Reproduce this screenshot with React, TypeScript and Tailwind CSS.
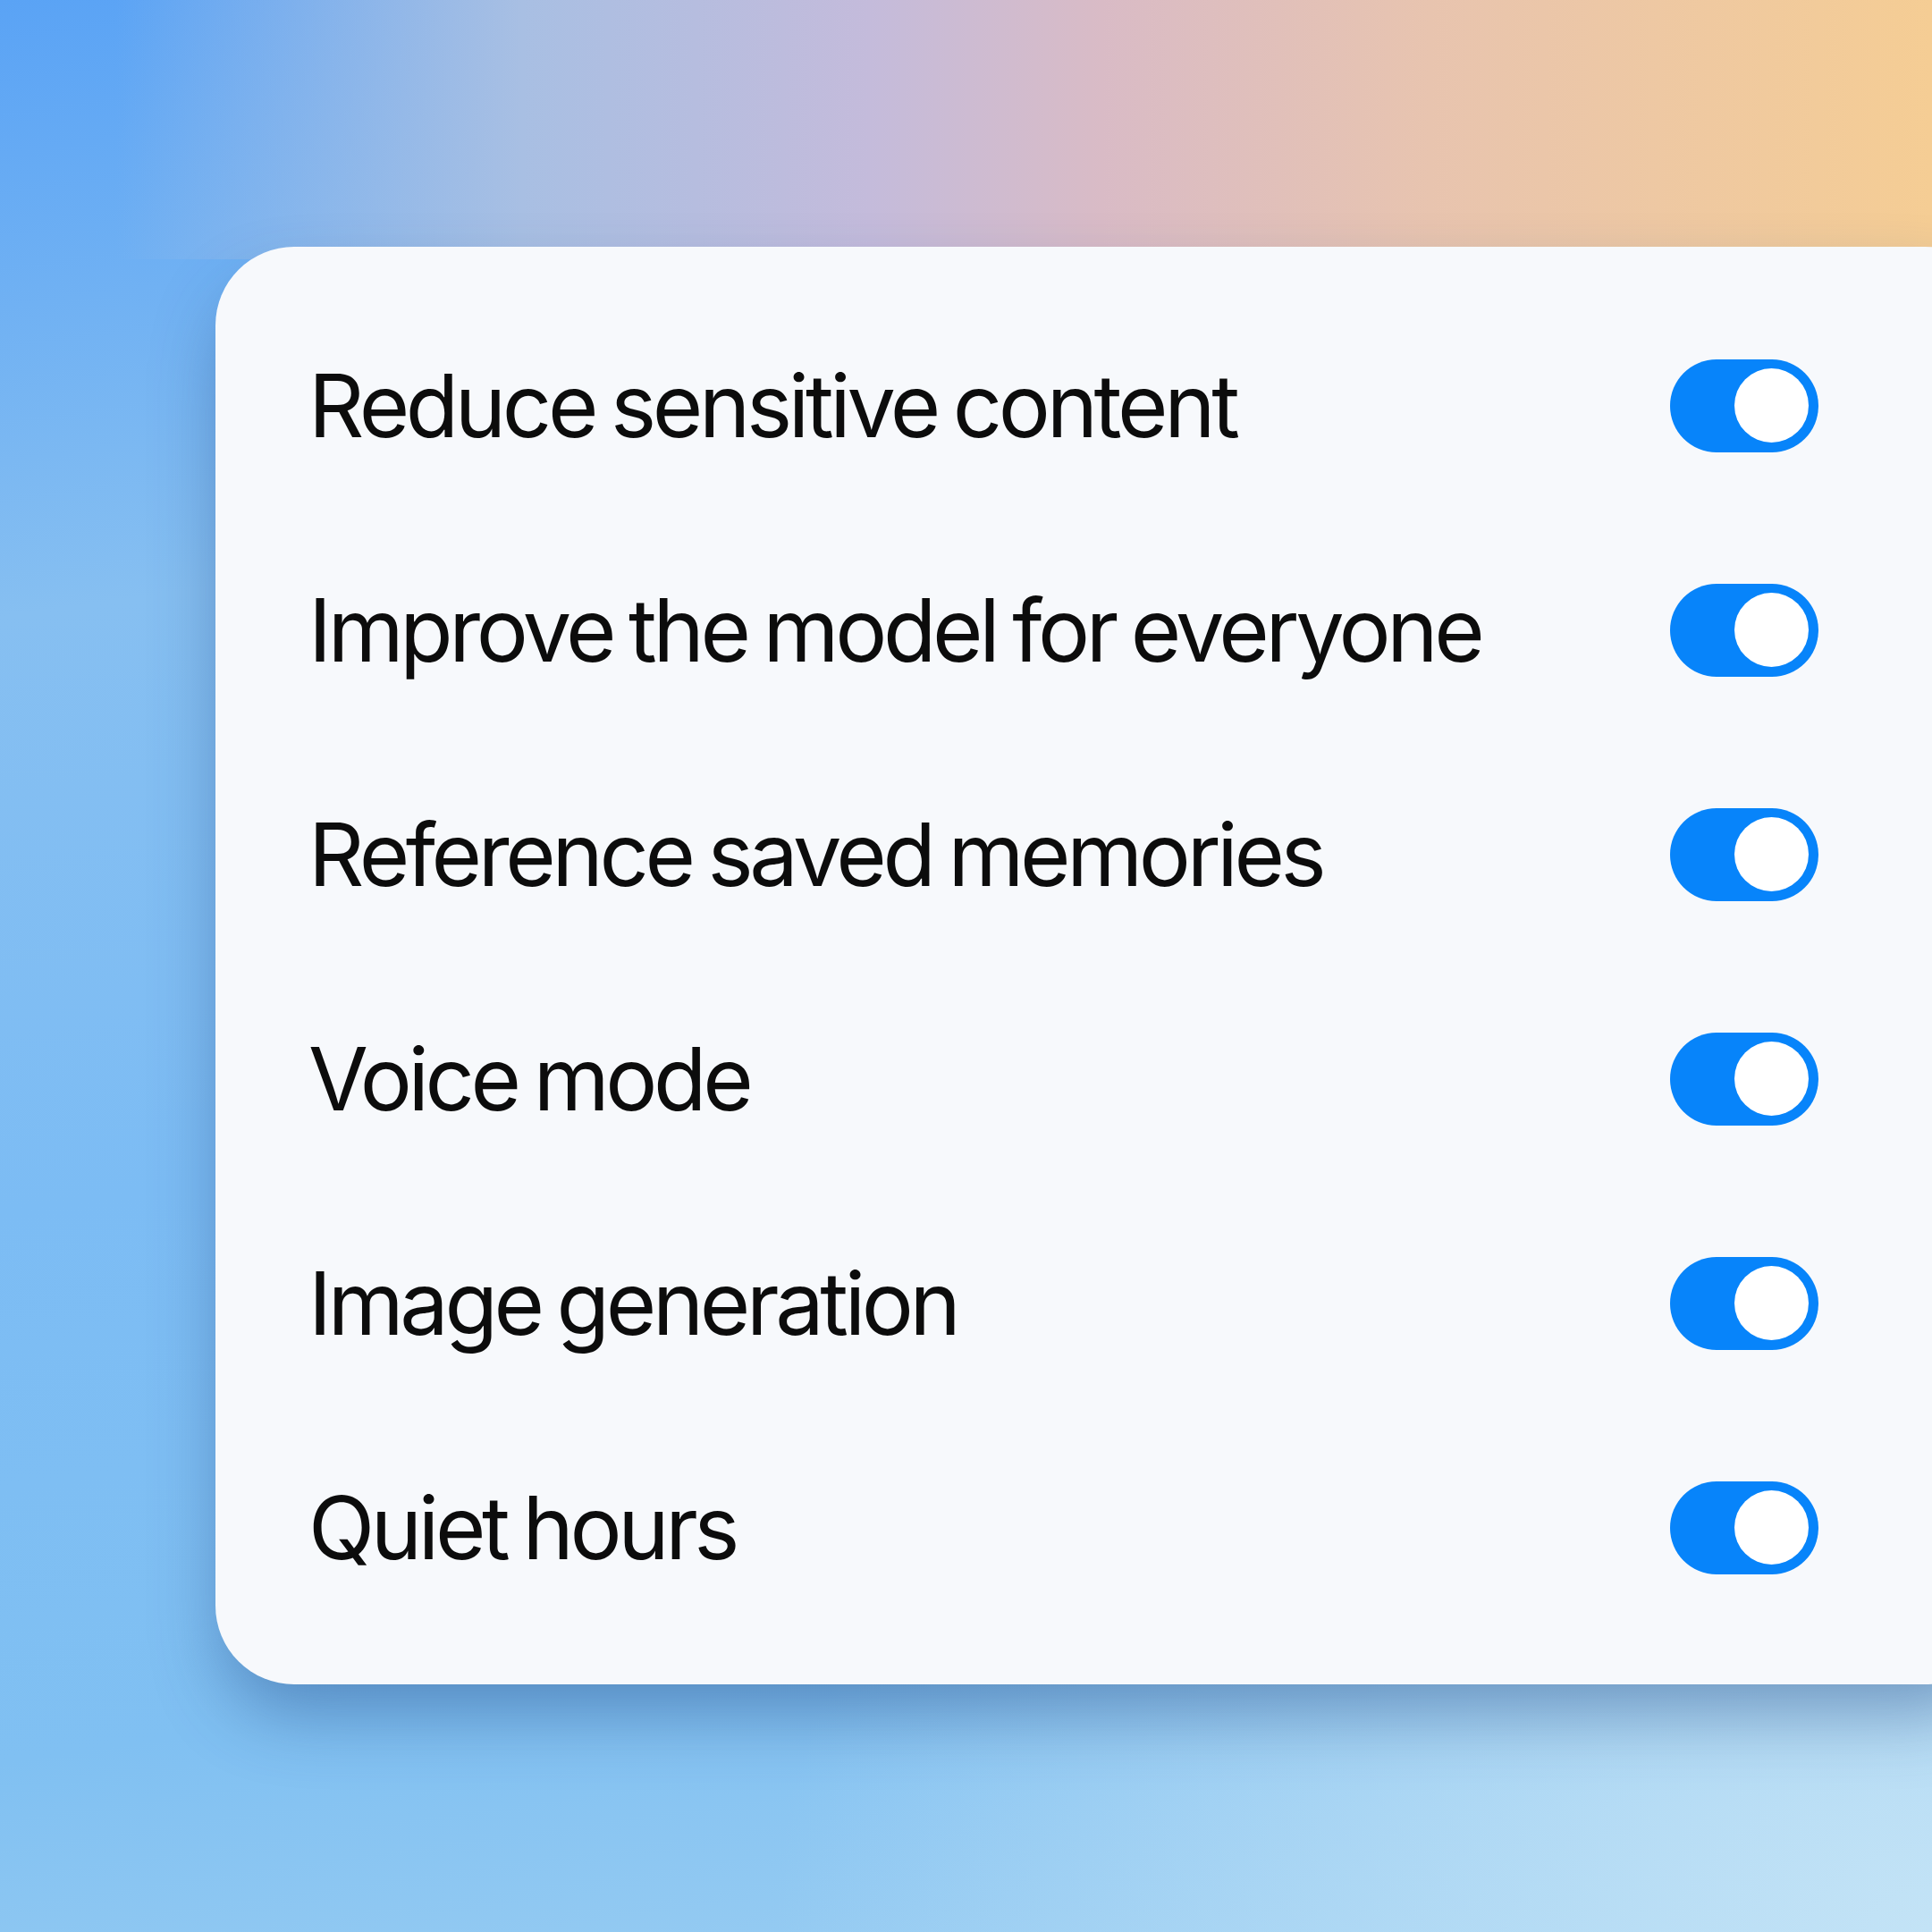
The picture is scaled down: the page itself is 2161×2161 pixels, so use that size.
const SETTINGS = [
  "Reduce sensitive content",
  "Improve the model for everyone",
  "Reference saved memories",
  "Voice mode",
  "Image generation",
  "Quiet hours",
];

const Toggle = () => (
  <div className="flex h-[104px] w-[166px] shrink-0 items-center justify-end rounded-full bg-[#0784fa] pr-[11px]">
    <div className="h-[83px] w-[83px] rounded-full bg-white" />
  </div>
);

export default function App() {
  return (
    <div
      className="relative h-[2161px] w-[2161px] overflow-hidden bg-[linear-gradient(90deg,rgba(120,170,235,0)_6%,#a8bfe3_27%,#c4bbdb_45%,#d9bbc6_57%,#e8c4af_74%,#f5cd94_100%),radial-gradient(ellipse_60%_45%_at_100%_100%,#c3e3f6_0%,rgba(195,227,246,0)_100%),linear-gradient(172deg,#5aa3f5_0%,#86bff1_28%,#7cbcf4_55%,#80c0f2_80%,#9fd0f2_100%)] bg-[length:100%_290px,100%_100%,100%_100%] bg-no-repeat pl-[241px] pt-[276px]"
      style={{ fontFamily: "Inter, 'Noto Sans', sans-serif" }}
    >
      <div className="w-[2000px] rounded-[88px] bg-[#f7f9fc] pb-[50px] pl-[104px] pt-[52px] shadow-[0_40px_80px_-10px_rgba(30,70,130,0.45)]">
        <div className="flex w-[1689px] flex-col">
          {SETTINGS.map((label) => (
            <div key={label} className="flex h-[251px] items-center justify-between">
              <span className="text-[97px] leading-none tracking-[-0.045em] [word-spacing:-5px] text-[#0c0c0c]">{label}</span>
              <Toggle />
            </div>
          ))}
        </div>
      </div>
    </div>
  );
}
